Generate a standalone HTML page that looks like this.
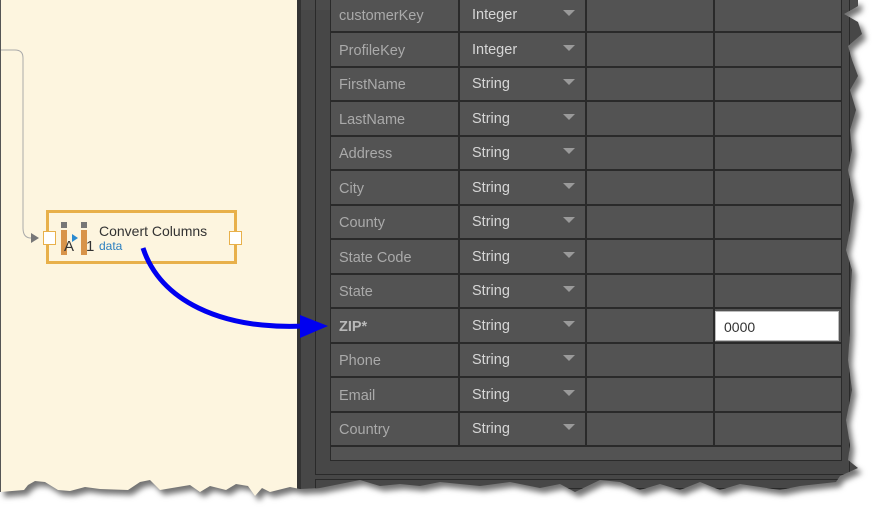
<!DOCTYPE html>
<html><head><meta charset="utf-8">
<style>
html,body{margin:0;padding:0;background:#fff;width:886px;height:523px;overflow:hidden;font-family:"Liberation Sans",sans-serif;}
#wrap{position:absolute;left:0;top:0;width:886px;height:523px;filter:drop-shadow(4px 5px 3px rgba(0,0,0,0.55));}
#page{position:absolute;left:0;top:0;width:886px;height:523px;
clip-path:polygon(0 0,858px 0,858px 6px,844px 14px,858px 22px,862px 34px,848px 46px,852px 60px,858px 76px,850px 90px,856px 110px,850px 130px,852px 150px,848px 170px,854px 200px,850px 230px,846px 250px,852px 270px,850px 300px,850px 330px,848px 360px,852px 390px,846px 420px,850px 445px,848px 460px,858px 468px,840px 476px,836px 482px,800px 486px,780px 490px,740px 484px,720px 490px,700px 482px,680px 490px,660px 484px,640px 490px,620px 482px,600px 480px,575px 492px,560px 484px,540px 488px,510px 482px,480px 486px,460px 484px,440px 482px,420px 486px,400px 484px,380px 486px,360px 480px,340px 484px,320px 488px,300px 489px,290px 487px,270px 492px,262px 488px,255px 496px,248px 486px,236px 484px,226px 490px,210px 486px,200px 492px,190px 485px,160px 490px,150px 480px,140px 482px,128px 490px,100px 489px,85px 487px,70px 491px,58px 490px,45px 482px,35px 481px,28px 485px,24px 490px,0 492px);}
#left{position:absolute;left:0;top:0;width:297px;height:523px;background:#fdf5df;border-left:1px solid #555;box-sizing:border-box;}
#strip{position:absolute;left:297px;top:0;width:4px;height:523px;background:#333;}
#right{position:absolute;left:301px;top:0;width:585px;height:523px;background:#474747;}
.topbar{position:absolute;left:0;top:0;width:585px;height:10px;background:#4b4b4b;}
.frame{position:absolute;left:14px;top:0;width:535px;height:475px;border:1px solid #2a2a2a;border-top:none;box-sizing:border-box;}
.frame2{position:absolute;left:14px;top:479px;width:535px;height:10px;border:1px solid #2a2a2a;box-sizing:border-box;}
.grid{position:absolute;left:29px;top:0;width:512px;height:461px;background:#535353;border:1px solid #2a2a2a;border-top:none;box-sizing:border-box;}
.row{position:absolute;left:0;width:510px;height:33px;border-bottom:2px solid #2a2a2a;}
.c{position:absolute;top:0;height:33px;border-right:2px solid #2a2a2a;}
.name{position:absolute;left:8px;font-size:14.5px;color:#aaaaaa;}
.type{position:absolute;left:141px;font-size:14.5px;color:#d6d6d6;}
.tri{position:absolute;left:232px;width:0;height:0;border-left:6px solid transparent;border-right:6px solid transparent;border-top:6px solid #9a9a9a;}
.val{position:absolute;left:384px;top:2px;width:124px;height:30px;background:#fff;border:1px solid #bbb;box-sizing:border-box;font-size:14px;color:#333;padding:7px 0 0 8px;}
.node{position:absolute;left:45px;top:210px;width:191px;height:54px;border:3px solid #e8b04a;box-sizing:border-box;background:#fdf5df;}
.port{position:absolute;width:13px;height:14px;background:#fff;border:1px solid #e8b04a;box-sizing:border-box;}
</style></head><body>
<div id="wrap"><div id="page">
<div id="left">
  <svg width="297" height="523" style="position:absolute;left:0;top:0">
    <path d="M0 50 L14 50 Q22 50 22 58 L22 228 Q22 238 30 238 L34 238" fill="none" stroke="#aaa" stroke-width="1"/>
    <path d="M30 233 L38 238 L30 243 Z" fill="#777"/>
  </svg>
  <div class="node">
    <div class="port" style="left:-6px;top:18px"></div>
    <div class="port" style="left:180px;top:18px"></div>
    <div style="position:absolute;left:12px;top:9px;width:6px;height:6px;background:#777"></div>
    <div style="position:absolute;left:12px;top:17px;width:6px;height:25px;background:#d8944a"></div>
    <div style="position:absolute;left:15px;top:25px;font-size:15px;color:#333">A</div>
    <div style="position:absolute;left:23px;top:21px;width:0;height:0;border-top:4px solid transparent;border-bottom:4px solid transparent;border-left:6px solid #2b8ad0"></div>
    <div style="position:absolute;left:32px;top:9px;width:6px;height:6px;background:#777"></div>
    <div style="position:absolute;left:32px;top:17px;width:6px;height:25px;background:#d8944a"></div>
    <div style="position:absolute;left:37px;top:25px;font-size:15px;color:#333">1</div>
    <div style="position:absolute;left:50px;top:10px;font-size:14px;color:#333;white-space:nowrap">Convert Columns</div>
    <div style="position:absolute;left:50px;top:26px;font-size:12px;color:#2b7fc0">data</div>
  </div>
</div>
<div id="strip"></div>
<div id="right">
  <div class="topbar"></div>
  <div class="frame"></div>
  <div class="frame2"></div>
  <div class="grid" id="grid"></div>
</div>
<svg width="886" height="523" style="position:absolute;left:0;top:0">
  <path d="M143 248 C160 300 220 330 305 326" fill="none" stroke="#0000f0" stroke-width="5"/>
  <path d="M300 315 L328 326 L300 338 Z" fill="#0000f0"/>
</svg>
</div></div>
<script>
var rows=[["customerKey","Integer"],["ProfileKey","Integer"],["FirstName","String"],["LastName","String"],["Address","String"],["City","String"],["County","String"],["State Code","String"],["State","String"],["ZIP*","String"],["Phone","String"],["Email","String"],["Country","String"]];
var g=document.getElementById('grid'),h='';
for(var i=0;i<rows.length;i++){
  var ty=Math.round(-2+i*34.5);
  var zip=rows[i][0]=="ZIP*";
  h+='<div class="row" style="top:'+ty+'px">'+
  '<div class="c" style="left:0;width:127px"></div><div class="c" style="left:129px;width:125px"></div><div class="c" style="left:256px;width:126px"></div>'+
  '<div class="name" style="top:10px;'+(zip?'font-weight:bold;color:#b8b8b8':'')+'">'+rows[i][0]+'</div>'+
  '<div class="type" style="top:9px">'+rows[i][1]+'</div><div class="tri" style="top:12px"></div>'+
  (zip?'<div class="val">0000</div>':'')+'</div>';
}
g.innerHTML=h;
</script>
</body></html>
